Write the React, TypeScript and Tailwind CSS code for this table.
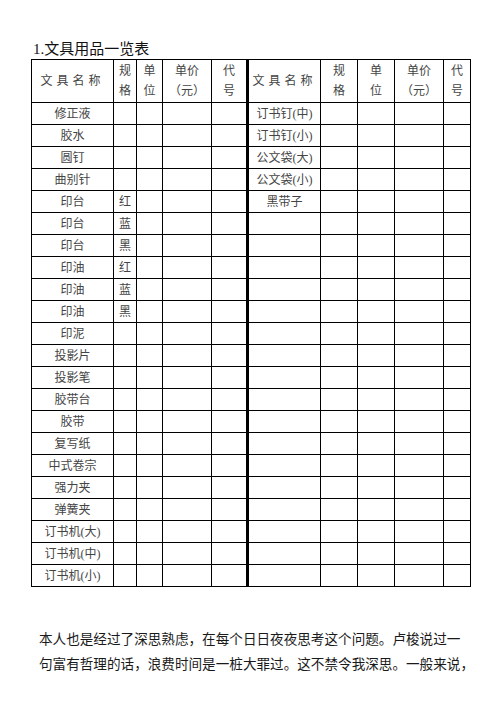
import React from "react";

const leftRows: [string, string][] = [
  ["修正液", ""],
  ["胶水", ""],
  ["圆钉", ""],
  ["曲别针", ""],
  ["印台", "红"],
  ["印台", "蓝"],
  ["印台", "黑"],
  ["印油", "红"],
  ["印油", "蓝"],
  ["印油", "黑"],
  ["印泥", ""],
  ["投影片", ""],
  ["投影笔", ""],
  ["胶带台", ""],
  ["胶带", ""],
  ["复写纸", ""],
  ["中式卷宗", ""],
  ["强力夹", ""],
  ["弹簧夹", ""],
  ["订书机(大)", ""],
  ["订书机(中)", ""],
  ["订书机(小)", ""],
];

const rightNames = ["订书钉(中)", "订书钉(小)", "公文袋(大)", "公文袋(小)", "黑带子"];

const cell = "border border-black p-0 text-center align-middle";

export default function App() {
  return (
    <div
      className="w-[502px] h-[710px] bg-white text-[#444]"
      style={{ fontFamily: '"Liberation Serif", "Noto Sans CJK SC", serif' }}
    >
      <div className="pl-[33px] pt-[40px] h-[59px] text-[15px] leading-[19px] text-[#111]">
        1.文具用品一览表
      </div>
      <div className="pl-[31px]">
        <table className="border-collapse table-fixed w-[439px] text-[12px] leading-[14px]">
          <colgroup>
            <col className="w-[82px]" />
            <col className="w-[23px]" />
            <col className="w-[26px]" />
            <col className="w-[49px]" />
            <col className="w-[36px]" />
            <col className="w-[73px]" />
            <col className="w-[37px]" />
            <col className="w-[37px]" />
            <col className="w-[49px]" />
            <col className="w-[27px]" />
          </colgroup>
          <thead>
            <tr className="h-[43px]">
              <td className={`${cell} tracking-[4px]`}>文具名称</td>
              <td className={`${cell} leading-[20px]`}>
                规<br />格
              </td>
              <td className={`${cell} leading-[20px]`}>
                单<br />位
              </td>
              <td className={`${cell} leading-[20px]`}>
                单价<br />（元）
              </td>
              <td className={`${cell} leading-[20px] border-r-[3px]`}>
                代<br />号
              </td>
              <td className={`${cell} tracking-[4px]`}>文具名称</td>
              <td className={`${cell} leading-[20px]`}>
                规<br />格
              </td>
              <td className={`${cell} leading-[20px]`}>
                单<br />位
              </td>
              <td className={`${cell} leading-[20px]`}>
                单价<br />（元）
              </td>
              <td className={`${cell} leading-[20px]`}>
                代<br />号
              </td>
            </tr>
          </thead>
          <tbody>
            {leftRows.map(([name, spec], i) => (
              <tr key={i} className="h-[22px]">
                <td className={cell}>{name}</td>
                <td className={cell}>{spec}</td>
                <td className={cell}></td>
                <td className={cell}></td>
                <td className={`${cell} border-r-[3px]`}></td>
                <td className={cell}>{rightNames[i] ?? ""}</td>
                <td className={cell}></td>
                <td className={cell}></td>
                <td className={cell}></td>
                <td className={cell}></td>
              </tr>
            ))}
          </tbody>
        </table>
      </div>
      <div className="pl-[39px] mt-[40px] text-[13.6px] leading-[25px] text-[#1a1a1a] whitespace-nowrap">
        <div>本人也是经过了深思熟虑，在每个日日夜夜思考这个问题。卢梭说过一</div>
        <div>句富有哲理的话，浪费时间是一桩大罪过。这不禁令我深思。一般来说，</div>
      </div>
    </div>
  );
}
